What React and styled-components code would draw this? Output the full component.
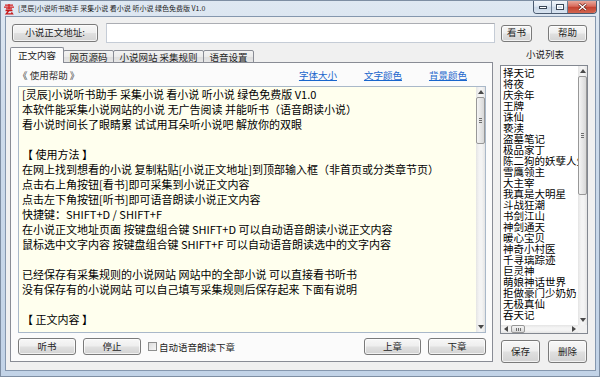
import React from "react";
import styled, {createGlobalStyle} from "styled-components";

const UI_FONT = `"Noto Sans CJK SC", "Microsoft YaHei", "Noto Sans", sans-serif`;

const GlobalStyle = createGlobalStyle`
    html, body {
        margin: 0;
        padding: 0;
    }
    body {
        width: 600px;
        height: 377px;
        overflow: hidden;
        font-family: ${UI_FONT};
        background: #c9d8ea;
    }
`;

const Frame = styled.div`
    width: 600px;
    height: 377px;
    box-sizing: border-box;
    display: flex;
    flex-direction: column;
    padding: 0 3px 5px 4px;
    border: 1px solid #7e8ea3;
    background: linear-gradient(180deg, #dfe8f2 0%, #cddbeb 30%, #c2d3e7 100%);
`;

const TitleBar = styled.div`
    height: 15px;
    margin: 0 -3px 0 -4px;
    display: flex;
    align-items: flex-start;
`;

const TitleIcon = styled.svg`
    width: 12px;
    height: 12px;
    margin: 2px 0 0 2px;
    flex: none;
`;

const TitleText = styled.span`
    margin-left: 3px;
    font-size: 7px;
    line-height: 15px;
    color: #1a1a1a;
    white-space: nowrap;
`;

const Captions = styled.div`
    margin-left: auto;
    margin-right: 2px;
    display: flex;
    height: 12px;
    border: 1px solid #4a5a70;
    border-top: none;
    border-radius: 0 0 4px 4px;
    overflow: hidden;
`;

const CapButton = styled.div`
    width: ${p => p.$w}px;
    display: flex;
    align-items: center;
    justify-content: center;
    border-left: ${p => (p.$first ? "none" : "1px solid #6e7f95")};
    background: ${p =>
        p.$close
            ? "linear-gradient(180deg, #e9a99c 0%, #d8695a 45%, #c4412f 50%, #d2654f 100%)"
            : "linear-gradient(180deg, #f1f5fa 0%, #dde6f1 45%, #c9d6e6 50%, #d8e3f0 100%)"};
`;

const Client = styled.div`
    flex: 1;
    display: flex;
    flex-direction: column;
    background: #f0f0f0;
    border: 1px solid #8597ae;
    padding: 5px 0 0 4px;
    min-height: 0;
`;

const TopRow = styled.div`
    height: 22px;
    display: flex;
    align-items: center;
`;

const Button = styled.button`
    width: ${p => p.$w}px;
    height: ${p => p.$h || 17}px;
    margin-left: ${p => p.$ml || 0}px;
    padding: 0;
    flex: none;
    font-family: ${UI_FONT};
    font-size: 9.5px;
    line-height: 1;
    color: #1e1e1e;
    border: 1px solid #7a7a7a;
    border-radius: 3px;
    background: linear-gradient(180deg, #f7f7f7 0%, #eeeeee 48%, #e0e0e0 52%, #d3d3d3 100%);
    box-shadow: inset 0 0 0 1px rgba(255, 255, 255, 0.7);
`;

const UrlInput = styled.div`
    width: 389px;
    height: 20px;
    margin-left: 8px;
    box-sizing: border-box;
    background: #fff;
    border: 1px solid #c5ccd6;
    border-top-color: #abadb3;
    flex: none;
`;

const Body = styled.div`
    margin-top: 4px;
    display: flex;
    align-items: flex-start;
`;

const LeftPane = styled.div`
    width: 483px;
    display: flex;
    flex-direction: column;
`;

const Tabs = styled.div`
    height: 15px;
    display: flex;
    align-items: flex-end;
    margin-bottom: -1px;
    position: relative;
    z-index: 1;
`;

const Tab = styled.div`
    width: ${p => p.$w}px;
    height: ${p => (p.$active ? 16 : 13)}px;
    box-sizing: border-box;
    margin-left: ${p => (p.$first ? 0 : -1)}px;
    display: flex;
    align-items: center;
    justify-content: center;
    font-size: 9.5px;
    color: #1e1e1e;
    border: 1px solid #898c95;
    border-bottom: ${p => (p.$active ? "none" : "1px solid #898c95")};
    border-radius: 2px 2px 0 0;
    background: ${p =>
        p.$active ? "#fbfbfb" : "linear-gradient(180deg, #f3f3f3 0%, #ebebeb 50%, #dedede 51%, #e6e6e6 100%)"};
    padding-bottom: ${p => (p.$active ? 1 : 0)}px;
    white-space: nowrap;
`;

const Panel = styled.div`
    height: 300px;
    box-sizing: border-box;
    border: 1px solid #898c95;
    background: #fbfbfb;
    padding: 0 6px 0 7px;
    display: flex;
    flex-direction: column;
`;

const PanelHeader = styled.div`
    height: 23px;
    display: flex;
    align-items: center;
    justify-content: space-between;
`;

const HelpTitle = styled.span`
    font-size: 9.5px;
    color: #333;
    white-space: nowrap;
`;

const Links = styled.div`
    display: flex;
    gap: 27px;
    padding-right: 19px;
`;

const Link = styled.a`
    font-size: 9.5px;
    color: #1a66cc;
    text-decoration: underline;
    white-space: nowrap;
`;

const TextBox = styled.div`
    height: 247px;
    box-sizing: border-box;
    border: 1px solid #a9b8c9;
    background: #ffffee;
    display: flex;
`;

const TextContent = styled.div`
    flex: 1;
    padding: 0 3px;
    font-size: 11px;
    line-height: 15px;
    color: #000;
    white-space: pre;
    overflow: hidden;
`;

const BottomRow = styled.div`
    margin-top: 5px;
    height: 17px;
    display: flex;
    align-items: center;
`;

const CheckLabel = styled.label`
    margin-left: 7px;
    display: flex;
    align-items: center;
    font-size: 9.5px;
    color: #1e1e1e;
    white-space: nowrap;
`;

const CheckBox = styled.span`
    width: 7px;
    height: 7px;
    margin-right: 2px;
    border: 1px solid #8e8f8f;
    background: linear-gradient(135deg, #dcdcdc, #f6f6f6);
`;

const Spacer = styled.div`
    flex: 1;
`;

const RightPane = styled.div`
    width: 90px;
    margin-left: 7px;
    display: flex;
    flex-direction: column;
`;

const ListTitle = styled.div`
    height: 17px;
    font-size: 9.5px;
    line-height: 12px;
    text-align: center;
    color: #1e1e1e;
`;

const ListBox = styled.div`
    width: 88px;
    height: 269px;
    box-sizing: border-box;
    border: 1px solid #828790;
    background: #fff;
    display: grid;
    grid-template-columns: 1fr 9px;
    grid-template-rows: 1fr 8px;
`;

const ListItems = styled.div`
    padding: 1px 0 0 2px;
    overflow: hidden;
    font-size: 10.5px;
    line-height: 11px;
    color: #000;
`;

const ListItem = styled.div`
    white-space: nowrap;
    height: 11px;
`;

const ListButtons = styled.div`
    margin-top: 6px;
    display: flex;
`;

const VScroll = styled.div`
    width: 9px;
    display: flex;
    flex-direction: column;
    background: linear-gradient(90deg, #e4e4e4 0%, #f4f4f4 35%, #f4f4f4 65%, #e4e4e4 100%);
`;

const HScroll = styled.div`
    height: 8px;
    display: flex;
    background: linear-gradient(180deg, #e4e4e4 0%, #f4f4f4 35%, #f4f4f4 65%, #e4e4e4 100%);
`;

const Arrow = styled.div`
    flex: none;
    ${p => (p.$h ? "width: 9px;" : "height: 10px;")}
    display: flex;
    align-items: center;
    justify-content: center;
`;

const Thumb = styled.div`
    flex: none;
    box-sizing: border-box;
    ${p => (p.$h ? `width: ${p.$size}px; margin-left: 1px;` : `height: ${p.$size}px;`)}
    border: 1px solid #989898;
    border-radius: 2px;
    background: ${p =>
        p.$h
            ? "linear-gradient(180deg, #f5f5f5, #d8d8d8)"
            : "linear-gradient(90deg, #f5f5f5, #d8d8d8)"};
    display: flex;
    align-items: center;
    justify-content: center;
`;

const Grip = styled.span`
    ${p => (p.$h ? "width: 5px; height: 3px;" : "width: 3px; height: 5px;")}
    background: ${p =>
        p.$h
            ? "repeating-linear-gradient(90deg, #6d6d6d 0 1px, transparent 1px 2px)"
            : "repeating-linear-gradient(180deg, #6d6d6d 0 1px, transparent 1px 2px)"};
`;

const Track = styled.div`
    flex: 1;
`;

const Corner = styled.div`
    background: #f0f0f0;
`;

const tri = {
    up: "0,4 3,0 6,4",
    down: "0,0 6,0 3,4",
    left: "4,0 4,6 0,3",
    right: "0,0 0,6 4,3",
};

const ArrowIcon = ({dir}) => {
    const horiz = dir === "left" || dir === "right";
    return (
        <svg width={horiz ? 4 : 6} height={horiz ? 6 : 4} viewBox={horiz ? "0 0 4 6" : "0 0 6 4"}>
            <polygon points={tri[dir]} fill="#4a4a4a" />
        </svg>
    );
};

const VerticalBar = ({thumbSize}) => (
    <VScroll>
        <Arrow><ArrowIcon dir="up" /></Arrow>
        <Thumb $size={thumbSize}><Grip /></Thumb>
        <Track />
        <Arrow><ArrowIcon dir="down" /></Arrow>
    </VScroll>
);

const HorizontalBar = () => (
    <HScroll>
        <Arrow $h><ArrowIcon dir="left" /></Arrow>
        <Thumb $h $size={14}><Grip $h /></Thumb>
        <Track />
        <Arrow $h><ArrowIcon dir="right" /></Arrow>
    </HScroll>
);

const CONTENT = [
    "[灵辰]小说听书助手 采集小说 看小说 听小说 绿色免费版 V1.0",
    "本软件能采集小说网站的小说 无广告阅读 并能听书（语音朗读小说）",
    "看小说时间长了眼睛累 试试用耳朵听小说吧 解放你的双眼",
    "",
    "【 使用方法 】",
    "在网上找到想看的小说 复制粘贴[小说正文地址]到顶部输入框（非首页或分类章节页）",
    "点击右上角按钮[看书]即可采集到小说正文内容",
    "点击左下角按钮[听书]即可语音朗读小说正文内容",
    "快捷键：SHIFT+D / SHIFT+F",
    "在小说正文地址页面 按键盘组合键 SHIFT+D 可以自动语音朗读小说正文内容",
    "鼠标选中文字内容 按键盘组合键 SHIFT+F 可以自动语音朗读选中的文字内容",
    "",
    "已经保存有采集规则的小说网站 网站中的全部小说 可以直接看书听书",
    "没有保存有的小说网站 可以自己填写采集规则后保存起来 下面有说明",
    "",
    "【 正文内容 】",
];

const NOVELS = [
    "择天记", "将夜", "庆余年", "王牌", "诛仙", "亵渎", "盗墓笔记", "极品家丁",
    "陈二狗的妖孽人生", "雪鹰领主", "大主宰", "我真是大明星", "斗战狂潮", "书剑江山",
    "神剑通天", "暖心宝贝", "神奇小村医", "千寻璃踪迹", "巨灵神", "萌娘神话世界",
    "拒做豪门少奶奶，总裁", "无极真仙", "吞天记",
];

const TABS = [
    {label: "正文内容", w: 54},
    {label: "网页源码", w: 51},
    {label: "小说网站 采集规则", w: 91},
    {label: "语音设置", w: 51},
];

const AppIcon = () => (
    <TitleIcon viewBox="0 0 12 12">
        <path d="M2 2.2h8M1 4.2h10M6 1v4.5M3 5.8h6" stroke="#d42020" strokeWidth="1.3" fill="none" />
        <path d="M2.5 7.5h7M6 7.5L3.2 10.8h6.3l-1-1.4" stroke="#c81818" strokeWidth="1.3" fill="none" />
    </TitleIcon>
);

const App = () => {
    return (
        <>
            <GlobalStyle />
            <Frame>
                <TitleBar>
                    <AppIcon />
                    <TitleText>[灵辰]小说听书助手 采集小说 看小说 听小说 绿色免费版 V1.0</TitleText>
                    <Captions>
                        <CapButton $w={17} $first>
                            <svg width="8" height="3" viewBox="0 0 8 3">
                                <rect x="0.5" y="0.5" width="7" height="2" fill="#fff" stroke="#3a4656" strokeWidth="1" />
                            </svg>
                        </CapButton>
                        <CapButton $w={15}>
                            <svg width="8" height="6" viewBox="0 0 8 6">
                                <rect x="0.5" y="0.5" width="7" height="5" fill="none" stroke="#3a4656" strokeWidth="1" />
                                <rect x="1.5" y="1.5" width="5" height="3" fill="none" stroke="#fff" strokeWidth="1" />
                            </svg>
                        </CapButton>
                        <CapButton $w={28} $close>
                            <svg width="9" height="8" viewBox="0 0 9 8">
                                <path d="M1 1l7 6M8 1l-7 6" stroke="#5a1a12" strokeWidth="2.6" />
                                <path d="M1 1l7 6M8 1l-7 6" stroke="#fff" strokeWidth="1.4" />
                            </svg>
                        </CapButton>
                    </Captions>
                </TitleBar>
                <Client>
                    <TopRow>
                        <Button $w={86} $h={18} $ml={2}>小说正文地址:</Button>
                        <UrlInput />
                        <Button $w={31} $ml={6}>看书</Button>
                        <Button $w={39} $ml={16}>帮助</Button>
                    </TopRow>
                    <Body>
                        <LeftPane>
                            <Tabs>
                                {TABS.map((t, i) => (
                                    <Tab key={t.label} $w={t.w} $first={i === 0} $active={i === 0}>
                                        {t.label}
                                    </Tab>
                                ))}
                            </Tabs>
                            <Panel>
                                <PanelHeader>
                                    <HelpTitle>《 使用帮助 》</HelpTitle>
                                    <Links>
                                        <Link>字体大小</Link>
                                        <Link>文字颜色</Link>
                                        <Link>背景颜色</Link>
                                    </Links>
                                </PanelHeader>
                                <TextBox>
                                    <TextContent>
                                        {CONTENT.map((line, i) => (
                                            <div key={i}>{line || " "}</div>
                                        ))}
                                    </TextContent>
                                    <VerticalBar thumbSize={47} />
                                </TextBox>
                                <BottomRow>
                                    <Button $w={58}>听书</Button>
                                    <Button $w={58} $ml={7}>停止</Button>
                                    <CheckLabel>
                                        <CheckBox />
                                        自动语音朗读下章
                                    </CheckLabel>
                                    <Spacer />
                                    <Button $w={57}>上章</Button>
                                    <Button $w={58} $ml={7}>下章</Button>
                                </BottomRow>
                            </Panel>
                        </LeftPane>
                        <RightPane>
                            <ListTitle>小说列表</ListTitle>
                            <ListBox>
                                <ListItems>
                                    {NOVELS.map(n => (
                                        <ListItem key={n}>{n}</ListItem>
                                    ))}
                                </ListItems>
                                <VerticalBar thumbSize={119} />
                                <HorizontalBar />
                                <Corner />
                            </ListBox>
                            <ListButtons>
                                <Button $w={39} $h={23} $ml={1}>保存</Button>
                                <Button $w={39} $h={23} $ml={8}>删除</Button>
                            </ListButtons>
                        </RightPane>
                    </Body>
                </Client>
            </Frame>
        </>
    );
};

export default App;
